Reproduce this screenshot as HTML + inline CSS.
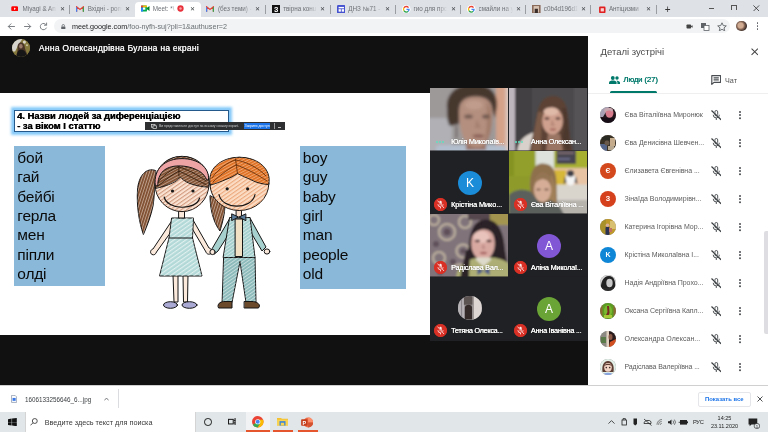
<!DOCTYPE html>
<html lang="uk">
<head>
<meta charset="utf-8">
<title>Meet</title>
<style>
*{box-sizing:border-box;margin:0;padding:0}
html,body{width:768px;height:432px;overflow:hidden;background:#111;font-family:"Liberation Sans",sans-serif}
#root{position:relative;width:768px;height:432px;overflow:hidden;background:#111;will-change:transform}
.abs{position:absolute}
/* tab bar */
#tabbar{left:0;top:0;width:768px;height:17px;background:#dee1e6}
.tab{position:absolute;top:2px;height:15px;width:65.15px;font-size:6.3px;color:#6d7176;line-height:13.4px;white-space:nowrap}
.tab .ic{position:absolute;left:6px;top:2.5px;width:8.6px;height:8.6px}
.tab .tt{position:absolute;left:17.4px;top:0;width:34px;overflow:hidden;-webkit-mask-image:linear-gradient(90deg,#000 75%,transparent);mask-image:linear-gradient(90deg,#000 75%,transparent)}
.tab .cl{position:absolute;left:54.6px;top:0;font-size:6.4px;color:#3c4043}
.tab .sep{position:absolute;right:0;top:2.5px;width:1px;height:9px;background:#9a9da2}
.tab.act{background:#fff;border-radius:4px 4px 0 0}
#toolbar{left:0;top:17px;width:768px;height:19px;background:#fff}
#pill{left:54px;top:19px;width:676px;height:14px;border-radius:7px;background:#f1f3f4}
/* meet */
#meetbar{left:0;top:36px;width:588px;height:52px;background:#111}
#slide{left:0;top:93px;width:430px;height:242px;background:#fff}
.bluebox{position:absolute;background:#8ab8d8;font-size:15.5px;line-height:19.4px;color:#0a0a0a;padding:1.7px 0 0 3.3px;letter-spacing:-0.2px}
#grid{left:430px;top:88px;width:158px;height:253px;background:#202124}
.tile{position:absolute;overflow:hidden;background:#202124}
.tile::after{content:"";position:absolute;left:0;right:0;bottom:0;height:1px;background:rgba(32,33,36,.55)}
.nm{position:absolute;color:#fff;font-size:7.3px;line-height:9px;white-space:nowrap;letter-spacing:-0.08px;text-shadow:0.15px 0 0 #fff,0 0 1px rgba(0,0,0,.5)}
.mic{position:absolute;width:9px;height:9px;border-radius:50%;background:#d93025}
.av{position:absolute;border-radius:50%;color:#fff;text-align:center}
/* panel */
#panel{left:588px;top:36px;width:180px;height:349px;background:#fff}
.row{position:absolute;left:0;width:180px;height:28px}
.row .pa{position:absolute;left:12px;top:6px;width:16px;height:16px;border-radius:50%;overflow:hidden;color:#fff;font-size:7px;line-height:16px;text-align:center;font-weight:bold}
.row .pn{position:absolute;left:36.5px;top:9px;font-size:7px;color:#5c5c5c;white-space:nowrap;line-height:10px}
.row .pm{position:absolute;left:122.6px;top:8px;width:10.4px;height:12px}
.row .pd{position:absolute;left:151px;top:9.6px;width:2px;height:10px}
#dlbar{left:0;top:385px;width:768px;height:27px;background:#fff;border-top:1px solid #d0d0d0}
#taskbar{left:0;top:412px;width:768px;height:20px;background:#e1e6e8}
</style>
</head>
<body>
<div id="root">
<div id="tabbar" class="abs">
<div class="tab" style="left:5.15px"><svg class="ic" viewBox="0 0 10 8" style="width:7.5px;height:5.6px;left:5.6px;top:3.9px"><rect x="0" y="0.5" width="10" height="7" rx="2" fill="#f00"/><path d="M4 2.3 L6.6 4 L4 5.7Z" fill="#fff"/></svg><span class="tt">Miyagi &amp; An</span><span class="cl">✕</span><span class="sep"></span></div>
<div class="tab" style="left:70.30px"><svg class="ic" viewBox="0 0 10 8" style="width:8px;height:6px;left:5.6px;top:3.7px"><path d="M0.5 7.5V1L5 4.6L9.5 1V7.5" fill="none" stroke="#ea4335" stroke-width="1.6"/><path d="M0.5 7.5V1.5" stroke="#4285f4" stroke-width="1.6"/><path d="M9.5 7.5V1.5" stroke="#34a853" stroke-width="1.6"/></svg><span class="tt">Вхідні - pom</span><span class="cl">✕</span></div>
<div class="tab act" style="left:135.45px"><svg class="ic" viewBox="0 0 10 8" style="width:8.5px;height:7px;left:6px;top:3.3px"><rect x="0" y="0.5" width="7" height="7" rx="1" fill="#00ac47"/><rect x="0" y="0.5" width="2.5" height="2.5" fill="#ea4335"/><rect x="0" y="3" width="2.5" height="4.5" fill="#2684fc"/><rect x="2.5" y="0.5" width="4.5" height="2" fill="#ffba00"/><rect x="2.3" y="2.8" width="2.8" height="2.6" fill="#fff"/><path d="M7 3 L10 1 V7 L7 5Z" fill="#00832d"/></svg><span class="tt" style="width:24px">Meet: *\</span><svg style="position:absolute;left:41.5px;top:3px;width:7px;height:7px" viewBox="0 0 8 8"><circle cx="4" cy="4" r="3.6" fill="#e8303a"/><circle cx="4" cy="4" r="1.4" fill="#fff" opacity=".55"/></svg><span class="cl">✕</span></div>
<div class="tab" style="left:200.60px"><svg class="ic" viewBox="0 0 10 8" style="width:8px;height:6px;left:5.6px;top:3.7px"><path d="M0.5 7.5V1L5 4.6L9.5 1V7.5" fill="none" stroke="#ea4335" stroke-width="1.6"/><path d="M0.5 7.5V1.5" stroke="#4285f4" stroke-width="1.6"/><path d="M9.5 7.5V1.5" stroke="#34a853" stroke-width="1.6"/></svg><span class="tt">(без теми) -</span><span class="cl">✕</span><span class="sep"></span></div>
<div class="tab" style="left:265.75px"><svg class="ic" viewBox="0 0 8 8"><rect width="8" height="8" fill="#111"/><text x="4" y="6.5" font-size="6.5" font-weight="bold" fill="#fff" text-anchor="middle" font-family="Liberation Sans">З</text></svg><span class="tt">твірна конu</span><span class="cl">✕</span><span class="sep"></span></div>
<div class="tab" style="left:330.90px"><svg class="ic" viewBox="0 0 8 8"><rect width="8" height="8" rx="1.2" fill="#4552cf"/><rect x="1.500" y="1.800" width="5" height="1.300" fill="#fff"/><rect x="1.500" y="3.900" width="2.100" height="2.300" fill="#fff"/><rect x="4.400" y="3.900" width="2.100" height="2.300" fill="#fff"/></svg><span class="tt">ДНЗ №71 -</span><span class="cl">✕</span><span class="sep"></span></div>
<div class="tab" style="left:396.05px"><svg class="ic" viewBox="0 0 10 10"><circle cx="5" cy="5" r="5" fill="#fff"/><g fill="none" stroke-width="1.5"><path d="M7.600 3A3.200 3.200 0 0 0 2.230 3.400" stroke="#ea4335"/><path d="M2.230 3.400A3.200 3.200 0 0 0 2.230 6.600" stroke="#fbbc05"/><path d="M2.230 6.600A3.200 3.200 0 0 0 7.300 7.200" stroke="#34a853"/><path d="M7.300 7.200A3.200 3.200 0 0 0 8.200 5H5.200" stroke="#4285f4"/></g></svg><span class="tt">гио для прс</span><span class="cl">✕</span><span class="sep"></span></div>
<div class="tab" style="left:461.20px"><svg class="ic" viewBox="0 0 10 10"><circle cx="5" cy="5" r="5" fill="#fff"/><g fill="none" stroke-width="1.5"><path d="M7.600 3A3.200 3.200 0 0 0 2.230 3.400" stroke="#ea4335"/><path d="M2.230 3.400A3.200 3.200 0 0 0 2.230 6.600" stroke="#fbbc05"/><path d="M2.230 6.600A3.200 3.200 0 0 0 7.300 7.200" stroke="#34a853"/><path d="M7.300 7.200A3.200 3.200 0 0 0 8.200 5H5.200" stroke="#4285f4"/></g></svg><span class="tt">смайли на у</span><span class="cl">✕</span><span class="sep"></span></div>
<div class="tab" style="left:526.35px"><svg class="ic" viewBox="0 0 8 8"><rect width="8" height="8" fill="#8a6b5a"/><rect x="1.5" y="1" width="5" height="6" fill="#d9c4b4"/><rect x="2.5" y="3.5" width="3" height="4.5" fill="#3a2c28"/></svg><span class="tt">c0b4d196d1</span><span class="cl">✕</span><span class="sep"></span></div>
<div class="tab" style="left:591.50px"><svg class="ic" viewBox="0 0 8 8"><rect x="1" y="1.5" width="6" height="6" rx="1" fill="#e02020"/><rect x="2.5" y="3" width="3" height="3" fill="#fff" opacity=".8"/></svg><span class="tt">Антіцизми</span><span class="cl">✕</span><span class="sep"></span></div>
<div class="abs" style="left:664.8px;top:2.5px;font-size:10px;line-height:13px;color:#333">+</div>
<div class="abs" style="left:708.5px;top:7.5px;width:5.5px;height:1px;background:#555"></div>
<div class="abs" style="left:731px;top:5px;width:5.5px;height:5px;border:1px solid #555;border-bottom:none"></div>
<svg class="abs" style="left:753px;top:4.5px;width:6.6px;height:6.6px" viewBox="0 0 8 8"><path d="M0.5 0.5L7.5 7.5M7.5 0.5L0.5 7.5" stroke="#333" stroke-width="1"/></svg>
</div>
<div id="toolbar" class="abs">
<svg class="abs" style="left:6px;top:3px;width:50px;height:13px" viewBox="0 0 50 13">
<g fill="none" stroke="#7d8186" stroke-width="1" stroke-linecap="round" stroke-linejoin="round">
<path d="M8.5 6.5H2.5M5 3.8L2.3 6.5L5 9.2"/>
<path d="M18.5 6.5H24.5M22 3.8L24.7 6.5L22 9.2"/>
<path d="M40.3 5A3.2 3.2 0 1 0 40.4 8"/><path d="M40.6 3V5.2H38.4"/>
</g></svg>

<div class="abs" style="left:736px;top:3.5px;width:10.5px;height:10.5px;border-radius:50%;background:radial-gradient(circle at 42% 45%,#d2ab93 0 30%,#8a6a58 45%,#3a2c28 70%,#5a4a44 100%)"></div>
<div class="abs" style="left:756.6px;top:4.8px;width:1.8px;height:1.8px;border-radius:50%;background:#5f6368;box-shadow:0 3px 0 #5f6368,0 6px 0 #5f6368"></div>
</div>
<div id="pill" class="abs">
<svg class="abs" style="left:7px;top:4.6px;width:4.6px;height:5.6px" viewBox="0 0 6 7"><rect x="0.3" y="3" width="5.4" height="4" rx=".6" fill="#5f6368"/><path d="M1.5 3V2A1.5 1.5 0 0 1 4.5 2V3" fill="none" stroke="#5f6368" stroke-width="1"/></svg>
<span class="abs" style="left:18px;top:0;font-size:7.2px;line-height:15.2px;color:#202124;white-space:nowrap">meet.google.com<span style="color:#6a6e72">/foo-nyfh-suj?pli=1&amp;authuser=2</span></span>
<svg class="abs" style="left:630.5px;top:3px;width:44px;height:9px" viewBox="0 0 44 9">
<rect x="1.500" y="2.500" width="4.600" height="4" rx=".8" fill="#444"/><path d="M6 4.200L7.600 3.200V5.800L6 4.800Z" fill="#444"/>
<rect x="16" y="1" width="5" height="5" fill="#5f6368"/><rect x="19" y="3.5" width="5" height="5" fill="#fff" stroke="#5f6368" stroke-width=".8"/>
<path d="M37 0.8L38.3 3.6L41.3 3.9L39 5.9L39.7 8.8L37 7.3L34.3 8.8L35 5.9L32.7 3.9L35.7 3.6Z" fill="none" stroke="#5f6368" stroke-width=".9"/>
</svg>
</div>
<div id="meetbar" class="abs">
<div class="abs" style="left:11.7px;top:2.7px;width:18.6px;height:18.6px;border-radius:50%;overflow:hidden;background:#857a44"><svg viewBox="0 0 18 18" style="position:absolute;left:0;top:0;width:100%;height:100%"><g filter="url(#avb)"><rect width="18" height="18" fill="#86793c"/><path d="M0 0H10L6 6L3 12H0Z" fill="#d6d2cc"/><circle cx="12" cy="3" r="1.500" fill="#d8d4c8"/><circle cx="14.500" cy="6" r="1" fill="#c8c0a0"/><path d="M5.500 9C5 5 7 3.500 8.800 3.500C11 3.500 12.500 6 12.500 9C13.500 12 14.500 14 15 16L4 17C4.500 14 5.500 12 5.500 9Z" fill="#4a3428"/><path d="M4.500 18C4.500 13 6 10.500 9 10.500C12 10.500 14 13 14.500 18Z" fill="#181614"/><ellipse cx="8.600" cy="7" rx="1.700" ry="2.200" fill="#9a7a68"/></g></svg></div>
<span class="abs" style="left:38.8px;top:6px;font-size:8.5px;line-height:12px;color:#f4f4f4;white-space:nowrap;letter-spacing:0.26px;text-shadow:0.25px 0 0 #f4f4f4">Анна Олександрівна Булана на екрані</span>
</div>
<div id="slide" class="abs">
<div class="abs" style="left:13.5px;top:16.5px;width:215px;height:22.5px;border:1px solid #24598c;background:#fff;box-shadow:0 0 2.5px 2.8px #8ccdf9, 0 0 1px 1.2px #3f9ae6"></div>
<div class="abs" style="left:17px;top:19px;font-size:8.4px;line-height:9.7px;font-weight:bold;color:#000;white-space:nowrap;transform-origin:0 0;transform:scaleX(1.1166);text-shadow:0.35px 0 0 #000">4. Назви людей за диференціацією<br>- за віком І статтю</div>
<div class="abs" style="left:145px;top:28.5px;width:140px;height:8.5px;background:#2e2f31"></div>
<svg class="abs" style="left:151px;top:30.5px;width:6px;height:5px" viewBox="0 0 6 5"><rect x=".4" y=".4" width="3.6" height="2.8" fill="none" stroke="#ddd" stroke-width=".7"/><rect x="2" y="1.8" width="3.6" height="2.8" fill="#2e2f31" stroke="#ddd" stroke-width=".7"/></svg>
<span class="abs" style="left:159px;top:30px;font-size:3.38px;line-height:7.2px;color:#c8c8c8;white-space:nowrap">Ви представляєте доступ на всьому своєму екрані.</span>
<div class="abs" style="left:243.8px;top:30.3px;width:26.5px;height:5.8px;background:#1a73e8;color:#fff;font-size:3.5px;line-height:7.4px;text-align:center;white-space:nowrap;overflow:hidden">Закрити доступ</div>
<div class="abs" style="left:273.5px;top:30px;width:.6px;height:5.6px;background:#999"></div>
<div class="abs" style="left:277.5px;top:33.5px;width:3px;height:1px;background:#bbb"></div>
<div class="bluebox" style="left:14px;top:53px;width:91px;height:140px">бой<br>гай<br>бейбі<br>герла<br>мен<br>піпли<br>олді</div>
<div class="bluebox" style="left:299.5px;top:53px;width:106.5px;height:143px">boy<br>guy<br>baby<br>girl<br>man<br>people<br>old</div>

<svg class="abs" style="left:130px;top:47px;width:160px;height:175px" viewBox="130 140 160 175">
<defs>
<pattern id="hw" width="3.4" height="3.4" patternUnits="userSpaceOnUse" patternTransform="rotate(-35)"><rect width="3.4" height="1.1" fill="#fff" opacity=".6"/></pattern>
<pattern id="hs" width="2.8" height="2.8" patternUnits="userSpaceOnUse" patternTransform="rotate(-35)"><rect width="2.8" height=".9" fill="#fff" opacity=".5"/></pattern>
<pattern id="hb" width="2.6" height="2.6" patternUnits="userSpaceOnUse" patternTransform="rotate(-72)"><rect width="2.6" height=".8" fill="#fff" opacity=".45"/><rect y="1.3" width="2.6" height=".5" fill="#2a160c" opacity=".45"/></pattern>
<pattern id="hb2" width="2.6" height="2.6" patternUnits="userSpaceOnUse" patternTransform="rotate(-28)"><rect width="2.6" height=".8" fill="#fff" opacity=".4"/><rect y="1.3" width="2.6" height=".5" fill="#2a160c" opacity=".4"/></pattern>
<pattern id="ho" width="2.6" height="2.6" patternUnits="userSpaceOnUse" patternTransform="rotate(-28)"><rect width="2.6" height=".8" fill="#fff" opacity=".35"/><rect y="1.3" width="2.6" height=".4" fill="#7a3408" opacity=".35"/></pattern>
<pattern id="hf" width="3.2" height="3.2" patternUnits="userSpaceOnUse" patternTransform="rotate(-35)"><rect width="3.2" height="1.1" fill="#b8704c" opacity=".62"/></pattern>
<pattern id="hf2" width="3.2" height="3.2" patternUnits="userSpaceOnUse" patternTransform="rotate(-35)"><rect width="3.2" height="1.1" fill="#e07f44" opacity=".55"/></pattern>
</defs>
<g stroke="#151515" stroke-width="1" stroke-linejoin="round" stroke-linecap="round">
<!-- girl ponytails -->
<path d="M155.500 170.500C146 167 138.500 176 137.500 190C136.500 206 139 222 143.400 234.500C147 226 151 216 153 206C154.500 198 154 188 156 181Z" fill="#8f5c3b"/>
<path d="M155.500 170.500C146 167 138.500 176 137.500 190C136.500 206 139 222 143.400 234.500C147 226 151 216 153 206C154.500 198 154 188 156 181Z" fill="url(#hb)" stroke="none"/>
<path d="M210 196C210 208 213 222 220 231C222 224 225 214 225 204Z" fill="#8f5c3b"/>
<path d="M210 196C210 208 213 222 220 231C222 224 225 214 225 204Z" fill="url(#hb)" stroke="none"/>
<!-- girl legs -->
<path d="M173 275L174 302H178L178 275ZM183 275L183.500 302H187.500L188 275Z" fill="#fbe9dc"/>
<ellipse cx="170.500" cy="305" rx="7" ry="3.300" fill="#a9a9d4"/><ellipse cx="189.500" cy="305" rx="7.500" ry="3.300" fill="#a9a9d4"/>
<!-- girl arms -->
<path d="M173 219L153 249C150.500 249.500 149.500 253 152 254.500C154 255.500 156 254 156.500 252L176 225Z" fill="#fbe9dc"/>
<path d="M192.500 219L209 248C211.500 248.500 213 251.500 211 253.500C209 255 206.500 254 206 252L190 225Z" fill="#fbe9dc"/>
<!-- dress -->
<path d="M172 218H193.500L192.500 238L202 276H159.500L169 238Z" fill="#b2d9d7"/>
<path d="M172 218H193.500L192.500 238L202 276H159.500L169 238Z" fill="url(#hw)" stroke="none"/>
<path d="M169 238H192.500" fill="none"/>
<rect x="179" y="209" width="5.500" height="9" fill="#fbe9dc"/>
<!-- boy pants -->
<path d="M224 257H255L256 302.500H246L240 261.500L232 302.500H222.500Z" fill="#8dbaba"/>
<path d="M224 257H255L256 302.500H246L240 261.500L232 302.500H222.500Z" fill="url(#hs)" stroke="none"/>
<path d="M218 306C218 303 221 301.500 225 301.500H232V308H219Z" fill="#6b4a2c"/>
<path d="M244.500 301.500H252C256 301.500 259.500 303.500 259.500 306L258.500 308H244.500Z" fill="#6b4a2c"/>
<!-- boy arms -->
<path d="M230 218L212.500 248C211 250 212 253.500 214.500 254L218 251L234 226Z" fill="#a6d0ce"/>
<path d="M250 218L266 247L262 251L247 226Z" fill="#a6d0ce"/>
<ellipse cx="267" cy="251.500" rx="2.800" ry="2.600" fill="#fbe9dc"/>
<ellipse cx="212.500" cy="252" rx="2.600" ry="2.600" fill="#fbe9dc"/>
<!-- boy jacket -->
<path d="M230 217.500H250L255 257.500H223.500Z" fill="#a6d0ce"/>
<path d="M230 217.500H250L255 257.500H223.500Z" fill="url(#hs)" stroke="none"/>
<path d="M235.500 219H242.500V256.500H235.500Z" fill="#f1e0c4"/>
<path d="M236.500 210H241.500V218H236.500Z" fill="#f6dcc8"/>
<path d="M232 214L238.500 217L232 220.500ZM245.500 214L239 217L245.500 220.500Z" fill="#5b7d9c"/>
<!-- girl head -->
<ellipse cx="182" cy="184" rx="27" ry="27.600" fill="#fbe3d3"/>
<ellipse cx="182" cy="184" rx="27" ry="27.600" fill="url(#hf)" stroke="none"/>
<!-- girl hair: top + bangs -->
<path d="M155.600 188.300C152.500 170 165 156.400 182 156.400C199 156.400 211.500 170 208.600 187.200C202 186.800 192 185 186.700 182C184 180.500 182 179 180.500 177C178 180 174 182.500 172.200 183.100C167 185.500 161 187.500 155.600 188.300Z" fill="#8f5c3b"/>
<path d="M155.600 188.300C152.500 170 165 156.400 182 156.400C199 156.400 211.500 170 208.600 187.200C202 186.800 192 185 186.700 182C184 180.500 182 179 180.500 177C178 180 174 182.500 172.200 183.100C167 185.500 161 187.500 155.600 188.300Z" fill="url(#hb2)" stroke="none"/>
<path d="M178.900 166V176M178.900 167C172 169 163 175 157.500 183M178.900 171C173 174 165 180 158 186M178.900 167C186 169 197 174 206 181M178.900 171C186 174 196 180 206 184.500" fill="none" stroke="#2a1608" stroke-width=".8"/>
<!-- headband -->
<path d="M155.300 185.500C153 168 166 158.600 182 158.600C197.500 158.600 209.600 167 208.500 180L206.700 179.800C204 173 198 170.500 196.700 169.800C191 167 185 165.900 178.900 165.900C172 165.900 166.500 168 163.300 170.900C159.500 174.500 157.600 180 157.800 185.300Z" fill="#eea4a4"/>
<!-- boy head -->
<ellipse cx="239.400" cy="183.900" rx="29.400" ry="26.600" fill="#fbdcc4"/>
<ellipse cx="239.400" cy="183.900" rx="29.400" ry="26.600" fill="url(#hf2)" stroke="none"/>
<path d="M210.400 185C206.500 170 220 157.300 239.400 157.300C259 157.300 272 170 268.600 184.600C262 184 256 182.500 252 180.200C246 177.500 241 175.500 237.500 173.500C234 176 230 178 227 179C221 181.500 215 184 210.400 185Z" fill="#e8792a"/>
<path d="M210.400 185C206.500 170 220 157.300 239.400 157.300C259 157.300 272 170 268.600 184.600C262 184 256 182.500 252 180.200C246 177.500 241 175.500 237.500 173.500C234 176 230 178 227 179C221 181.500 215 184 210.400 185Z" fill="url(#ho)" stroke="none"/>
<path d="M235.500 159C236 164 237 169 237.500 173.500M235.500 160C228 162 218 169 212 178M236 165C230 168 221 174 213 182M235.500 160C244 161 258 167 266 176M236.500 165C245 168 257 174 267 181" fill="none" stroke="#5a2808" stroke-width=".8"/>
<!-- faces -->
<g fill="#1a1a1a" stroke="none"><circle cx="172.500" cy="191" r="1.600"/><circle cx="193" cy="191" r="1.600"/><circle cx="227.200" cy="188.800" r="1.600"/><circle cx="247.600" cy="188.800" r="1.600"/></g>
<path d="M164.200 197C167 210 196 211 199.600 198" fill="none" stroke-width="1.200"/>
<path d="M219 194.500C222 210 252 210 255 194.500" fill="none" stroke-width="1.200"/>
</g>
</svg>

</div>
<div id="grid" class="abs">
<div class="tile" style="left:0px;top:0px;width:79px;height:63px;border-right:1px solid #202124"><svg class="abs" style="left:0;top:0;width:79px;height:63px" viewBox="430 88 79 63" preserveAspectRatio="none"><defs><filter id="b43088" x="-10%" y="-10%" width="120%" height="120%"><feGaussianBlur stdDeviation="1.45"/></filter></defs><g filter="url(#b43088)">
<rect x="420" y="80" width="100" height="80" fill="#9d9999"/>
<rect x="420" y="118" width="32" height="42" fill="#b0b0b5"/>
<rect x="496" y="80" width="20" height="80" fill="#d4a289"/>
<rect x="505.500" y="80" width="8" height="80" fill="#dac6be"/>
<path d="M447 108C446 94 456 84 474 84C490 84 498 94 497 106L495 118L490 104C482 98.500 466 98.500 460 104L459 124L450 126C447 122 447 114 447 108Z" fill="#46372f"/>
<rect x="436" y="145" width="70" height="12" rx="4" fill="#b2becd"/>
<rect x="466" y="136" width="20" height="14" fill="#977163"/>
<path d="M459 112C459 100 466 96.500 476 96.500C486 96.500 492.500 101 492.500 112C493 124 491 136 486 143C482 149 472 149 467 143C461 136 459 124 459 112Z" fill="#b48f7f"/>
<path d="M486 102C492 106 493 120 490 134C488 140 486 144 484 146C487 130 488 114 486 102Z" fill="#a27c6b"/>
<ellipse cx="474" cy="105" rx="9" ry="4.500" fill="#bf9c8c"/>
<ellipse cx="468.500" cy="116.500" rx="4.500" ry="2" fill="#70584f"/>
<ellipse cx="486" cy="116.500" rx="4" ry="2" fill="#6c544b"/>
<path d="M476.500 119L475 128H481Z" fill="#a47e6e"/>
<ellipse cx="478.500" cy="136" rx="6" ry="1.600" fill="#84594f"/>
<path d="M456.500 126V138" stroke="#4a3c3a" stroke-width="1.200" fill="none"/>
</g></svg><span style="position:absolute;left:6px;top:52.6px;width:2px;height:2px;border-radius:50%;background:#5fe0c0;box-shadow:3px 0 0 #5fe0c0,6px 0 0 #5fe0c0"></span><span class="nm" style="left:21px;top:49.2px;letter-spacing:-0.208px">Юлія Миколаїв...</span></div>
<div class="tile" style="left:79px;top:0px;width:79px;height:63px;border-right:1px solid #202124"><svg class="abs" style="left:0;top:0;width:79px;height:63px" viewBox="509 88 79 63" preserveAspectRatio="none"><defs><filter id="b50988" x="-10%" y="-10%" width="120%" height="120%"><feGaussianBlur stdDeviation="1.1"/></filter></defs><g filter="url(#b50988)">
<rect x="500" y="80" width="100" height="80" fill="#4c4a4c"/>
<rect x="500" y="80" width="32" height="80" fill="#424042"/>
<rect x="507" y="80" width="8" height="80" fill="#beb6bd"/>
<rect x="574" y="80" width="20" height="80" fill="#555355"/>
<path d="M517 154C517 140 526 133 540 131L546 154Z" fill="#d8d0ca"/>
<path d="M553 96C543 96 539 104 537 114C535 126 532 138 529 154H573C570 140 569 128 568 116C567 104 563 96 553 96Z" fill="#5c4236"/>
<path d="M538 112C535 126 533 140 531 154L541 154C541 140 541 126 543 112Z" fill="#7a5a46"/>
<path d="M546 152L548 134H560L563 152Z" fill="#9a7464"/>
<ellipse cx="552.500" cy="121" rx="10.300" ry="13.500" fill="#cfa08e"/>
<ellipse cx="551" cy="111.500" rx="7.500" ry="4" fill="#e0baa8"/>
<ellipse cx="547" cy="118.500" rx="2.600" ry="1.200" fill="#5e4238"/>
<ellipse cx="558" cy="118.500" rx="2.600" ry="1.200" fill="#5e4238"/>
<path d="M552 119L550.500 126H555Z" fill="#b88878"/>
<ellipse cx="553" cy="129.500" rx="3.200" ry="1.200" fill="#a66a60"/>
<path d="M562 108C565 118 565 128 562 136L566 150L571 150C569 136 569 120 566 108Z" fill="#4e382e"/>
</g></svg><span style="position:absolute;left:6px;top:52.6px;width:2px;height:2px;border-radius:50%;background:#5fe0c0;box-shadow:3px 0 0 #5fe0c0,6px 0 0 #5fe0c0"></span><span class="nm" style="left:21.8px;top:49.2px;letter-spacing:-0.249px">Анна Олексан...</span></div>
<div class="tile" style="left:0px;top:63px;width:79px;height:63px;border-right:1px solid #202124"><div class="av" style="left:28px;top:19.5px;width:24px;height:24px;background:#1a8cd8;font-size:12px;line-height:24.5px">K</div><span class="mic" style="left:4px;top:46.8px;width:13px;height:13px"><svg viewBox="0 0 13 13" style="position:absolute;left:0;top:0;width:13px;height:13px"><circle cx="6.5" cy="6.5" r="6.5" fill="#d93025"/><rect x="5.3" y="2.8" width="2.4" height="4.6" rx="1.2" fill="#fdeeee"/><path d="M3.9 6.2A2.6 2.6 0 0 0 9.1 6.2M6.5 8.8V10.4" fill="none" stroke="#fdeeee" stroke-width=".8"/><path d="M3.2 2.8L9.8 10.2" stroke="#d93025" stroke-width="1.6"/><path d="M3.5 2.6L10 10" stroke="#fdeeee" stroke-width=".8"/></svg></span><span class="nm" style="left:21px;top:49.2px;letter-spacing:-0.077px">Крістіна Мико...</span></div>
<div class="tile" style="left:79px;top:63px;width:79px;height:63px;border-right:1px solid #202124"><svg class="abs" style="left:0;top:0;width:79px;height:63px" viewBox="509 151 79 63" preserveAspectRatio="none"><defs><filter id="b509151" x="-10%" y="-10%" width="120%" height="120%"><feGaussianBlur stdDeviation="0.9"/></filter></defs><g filter="url(#b509151)">
<rect x="500" y="145" width="100" height="80" fill="#929f2a"/>
<rect x="500" y="145" width="14" height="80" fill="#859323"/>
<rect x="505" y="176" width="32" height="20" fill="#8e9b2c"/>
<rect x="535.500" y="145" width="19" height="40" fill="#dde2dc"/>
<rect x="554" y="145" width="40" height="24" fill="#a8b030"/>
<rect x="556.500" y="148" width="19.500" height="16" fill="#474450"/>
<rect x="558" y="152" width="16" height="2" fill="#7a6a70"/><rect x="558" y="158" width="12" height="2" fill="#6a6a8a"/>
<rect x="554" y="168" width="40" height="17" fill="#e7c3a3"/>
<rect x="554.500" y="170" width="11.500" height="15" fill="#d8b838"/>
<rect x="554" y="184.500" width="40" height="17" fill="#d9d5cd"/>
<rect x="554" y="200" width="40" height="20" fill="#b6b2ac"/>
<ellipse cx="570.500" cy="179" rx="5" ry="6.500" fill="#f4f4f4"/>
<ellipse cx="570.500" cy="173.500" rx="3.600" ry="3.200" fill="#3c3c46"/>
<path d="M565 176L563.500 184L566.500 182ZM576 176L577.500 184L574.500 182Z" fill="#3c3c46"/>
<path d="M543 163.500C533 163.500 530 174 530 186L531 204H557L556.500 184C556.500 172 553 163.500 543 163.500Z" fill="#8e704e"/>
<path d="M551 174C556 184 556 196 555.500 206L548 206Z" fill="#a08058"/>
<path d="M534 190C534 182 538 179 542.500 179C547 179 551 182 551 190C551 197 547 202 542.500 202C538 202 534 197 534 190Z" fill="#d6ae98"/>
<path d="M533 186C534 178 538 172 543 172C548 172 552 178 552 187C549 181 546 179 543 179C540 179 536 181 533 186Z" fill="#947452"/>
<ellipse cx="538.500" cy="189.500" rx="2.400" ry="1" fill="#7a5a4a"/><ellipse cx="546.500" cy="189.500" rx="2.400" ry="1" fill="#7a5a4a"/>
<path d="M509 195C514 189 527 188 532 193L538 201C542 204 546 203 550 200L558 204L566 218H509Z" fill="#5c605d"/>
</g></svg><span class="mic" style="left:4.5px;top:46.8px;width:13px;height:13px"><svg viewBox="0 0 13 13" style="position:absolute;left:0;top:0;width:13px;height:13px"><circle cx="6.5" cy="6.5" r="6.5" fill="#d93025"/><rect x="5.3" y="2.8" width="2.4" height="4.6" rx="1.2" fill="#fdeeee"/><path d="M3.9 6.2A2.6 2.6 0 0 0 9.1 6.2M6.5 8.8V10.4" fill="none" stroke="#fdeeee" stroke-width=".8"/><path d="M3.2 2.8L9.8 10.2" stroke="#d93025" stroke-width="1.6"/><path d="M3.5 2.6L10 10" stroke="#fdeeee" stroke-width=".8"/></svg></span><span class="nm" style="left:21.8px;top:49.2px;letter-spacing:-0.235px">Єва Віталіївна ...</span></div>
<div class="tile" style="left:0px;top:126px;width:79px;height:63px;border-right:1px solid #202124"><svg class="abs" style="left:0;top:0;width:79px;height:63px" viewBox="430 214 79 63" preserveAspectRatio="none"><defs><filter id="b430214" x="-10%" y="-10%" width="120%" height="120%"><feGaussianBlur stdDeviation="0.9"/></filter></defs><g filter="url(#b430214)">
<rect x="420" y="205" width="100" height="80" fill="#80737a"/>
<g fill="none" stroke="#b4a89a" stroke-width="2.600"><circle cx="447" cy="232" r="8"/><circle cx="463" cy="251" r="6.500"/><circle cx="439" cy="258" r="6"/><circle cx="465" cy="222" r="6"/><circle cx="434" cy="220" r="5"/><path d="M452 268C458 262 466 264 468 272"/></g>
<g fill="#5e5058"><circle cx="447" cy="232" r="3.500"/><circle cx="463" cy="251" r="2.600"/><circle cx="436" cy="244" r="3"/><circle cx="453" cy="262" r="3"/><circle cx="440" cy="272" r="3"/></g>
<rect x="489" y="212" width="22" height="13" fill="#a3954f"/>
<rect x="468" y="212" width="22" height="8" fill="#54464e"/>
<path d="M486 219.500C474 219.500 470 232 469 244C468 256 464 266 460 280H510L505 250C504 234 499 219.500 486 219.500Z" fill="#2a2028"/>
<path d="M456 280C456 264 468 258 484 257C496 257 508 260 510 266V280Z" fill="#adae74"/>
<ellipse cx="483" cy="243.500" rx="11.800" ry="16.500" fill="#d8a9a1"/>
<ellipse cx="481.500" cy="237" rx="8" ry="6" fill="#e8c3bb"/>
<path d="M470.500 239C471 229 477 223.500 486 223.500C494 223.500 497.500 230 497.500 241C494 233 488 228.500 482 229.500C476.500 230.500 473 234 470.500 239Z" fill="#2a2028"/>
<ellipse cx="477.500" cy="241" rx="2.700" ry="1.200" fill="#4e3234"/><ellipse cx="489" cy="241" rx="2.700" ry="1.200" fill="#4e3234"/>
<path d="M483 243L481.500 249H485.500Z" fill="#c08c86"/>
<ellipse cx="483.500" cy="253" rx="3.400" ry="1.200" fill="#a65e5c"/>
<path d="M466 250C464 260 461 270 460 280L469 280C469 268 470 258 470.500 250Z" fill="#2a2028"/>
<path d="M477.500 268L483.500 271L477.500 275ZM489.500 268L483.500 271L489.500 275Z" fill="#46568a"/>
<path d="M475.500 259.500L483.500 266.500L491.500 259.500L489.500 257.500H477.500Z" fill="#dedacb"/>
</g></svg><span class="mic" style="left:4px;top:46.8px;width:13px;height:13px"><svg viewBox="0 0 13 13" style="position:absolute;left:0;top:0;width:13px;height:13px"><circle cx="6.5" cy="6.5" r="6.5" fill="#d93025"/><rect x="5.3" y="2.8" width="2.4" height="4.6" rx="1.2" fill="#fdeeee"/><path d="M3.9 6.2A2.6 2.6 0 0 0 9.1 6.2M6.5 8.8V10.4" fill="none" stroke="#fdeeee" stroke-width=".8"/><path d="M3.2 2.8L9.8 10.2" stroke="#d93025" stroke-width="1.6"/><path d="M3.5 2.6L10 10" stroke="#fdeeee" stroke-width=".8"/></svg></span><span class="nm" style="left:21px;top:49.2px;letter-spacing:-0.230px">Радіслава Вал...</span></div>
<div class="tile" style="left:79px;top:126px;width:79px;height:63px;border-right:1px solid #202124"><div class="av" style="left:28px;top:19.5px;width:24px;height:24px;background:#8257d6;font-size:12px;line-height:24.5px">A</div><span class="mic" style="left:4.5px;top:46.8px;width:13px;height:13px"><svg viewBox="0 0 13 13" style="position:absolute;left:0;top:0;width:13px;height:13px"><circle cx="6.5" cy="6.5" r="6.5" fill="#d93025"/><rect x="5.3" y="2.8" width="2.4" height="4.6" rx="1.2" fill="#fdeeee"/><path d="M3.9 6.2A2.6 2.6 0 0 0 9.1 6.2M6.5 8.8V10.4" fill="none" stroke="#fdeeee" stroke-width=".8"/><path d="M3.2 2.8L9.8 10.2" stroke="#d93025" stroke-width="1.6"/><path d="M3.5 2.6L10 10" stroke="#fdeeee" stroke-width=".8"/></svg></span><span class="nm" style="left:21.8px;top:49.2px;letter-spacing:-0.195px">Аліна Миколаї...</span></div>
<div class="tile" style="left:0px;top:189px;width:79px;height:63px;border-right:1px solid #202124"><div class="av" style="left:28.3px;top:19.3px;width:23.6px;height:23.6px;background:#b4b0b3;overflow:hidden"><svg viewBox="-12 -12 24 24" style="position:absolute;left:0;top:0;width:100%;height:100%"><g filter="url(#avb)"><rect x="-12" y="-12" width="8" height="24" fill="#b6b2b6"/><rect x="-9" y="-12" width="1.2" height="24" fill="#8a868c"/><rect x="-6" y="-12" width="10" height="9" fill="#5c5252"/><rect x="-5.500" y="-3" width="9" height="15" fill="#8a8486"/><path d="M-5 12V0C-5 -4 2.400 -4 2.400 0V12Z" fill="#352c2c"/><rect x="3" y="-12" width="9" height="24" fill="#ddd6d2"/><rect x="3" y="-12" width="1.200" height="24" fill="#9a9492"/></g></svg></div><span class="mic" style="left:4px;top:46.8px;width:13px;height:13px"><svg viewBox="0 0 13 13" style="position:absolute;left:0;top:0;width:13px;height:13px"><circle cx="6.5" cy="6.5" r="6.5" fill="#d93025"/><rect x="5.3" y="2.8" width="2.4" height="4.6" rx="1.2" fill="#fdeeee"/><path d="M3.9 6.2A2.6 2.6 0 0 0 9.1 6.2M6.5 8.8V10.4" fill="none" stroke="#fdeeee" stroke-width=".8"/><path d="M3.2 2.8L9.8 10.2" stroke="#d93025" stroke-width="1.6"/><path d="M3.5 2.6L10 10" stroke="#fdeeee" stroke-width=".8"/></svg></span><span class="nm" style="left:21px;top:49.2px;letter-spacing:-0.291px">Тетяна Олекса...</span></div>
<div class="tile" style="left:79px;top:189px;width:79px;height:63px;border-right:1px solid #202124"><div class="av" style="left:28px;top:19.5px;width:24px;height:24px;background:#6aa336;font-size:12px;line-height:24.5px">A</div><span class="mic" style="left:4.5px;top:46.8px;width:13px;height:13px"><svg viewBox="0 0 13 13" style="position:absolute;left:0;top:0;width:13px;height:13px"><circle cx="6.5" cy="6.5" r="6.5" fill="#d93025"/><rect x="5.3" y="2.8" width="2.4" height="4.6" rx="1.2" fill="#fdeeee"/><path d="M3.9 6.2A2.6 2.6 0 0 0 9.1 6.2M6.5 8.8V10.4" fill="none" stroke="#fdeeee" stroke-width=".8"/><path d="M3.2 2.8L9.8 10.2" stroke="#d93025" stroke-width="1.6"/><path d="M3.5 2.6L10 10" stroke="#fdeeee" stroke-width=".8"/></svg></span><span class="nm" style="left:21.8px;top:49.2px;letter-spacing:-0.243px">Анна Іванівна ...</span></div>
</div>
<div id="panel" class="abs"><svg width="0" height="0" style="position:absolute"><defs><filter id="avb"><feGaussianBlur stdDeviation=".45"/></filter></defs></svg>
<span class="abs" style="left:12.5px;top:9.5px;font-size:9.5px;line-height:12px;color:#4a4a4a;white-space:nowrap">Деталі зустрічі</span>
<svg class="abs" style="left:162.5px;top:12px;width:7.5px;height:7.5px" viewBox="0 0 8 8"><path d="M0.6 0.6L7.4 7.4M7.4 0.6L0.6 7.4" stroke="#444" stroke-width="1.1"/></svg>
<svg class="abs" style="left:21px;top:40px;width:11px;height:8px" viewBox="0 0 11 8"><circle cx="3.8" cy="2" r="1.9" fill="#00796b"/><path d="M0 8V6.6C0 5.2 2.4 4.6 3.8 4.6S7.6 5.2 7.6 6.6V8Z" fill="#00796b"/><circle cx="8" cy="2" r="1.7" fill="#00796b"/><path d="M8.4 8V6.5C8.4 5.6 8 5 7.4 4.7 9 4.7 11 5.3 11 6.6V8Z" fill="#00796b"/></svg>
<span class="abs" style="left:35.2px;top:38.6px;font-size:7.8px;line-height:10px;color:#00796b;white-space:nowrap;letter-spacing:-0.14px;text-shadow:0.25px 0 0 #00796b">Люди (27)</span>
<div class="abs" style="left:22px;top:55px;width:46.5px;height:2px;background:#00796b;border-radius:1.5px 1.5px 0 0"></div>
<div class="abs" style="left:0;top:57px;width:180px;height:1px;background:#efefef"></div>
<svg class="abs" style="left:122.7px;top:39px;width:10.4px;height:10px" viewBox="0 0 10 10"><path d="M0.600 0.600H9.400V7.300H2.800L0.600 9.400Z" fill="none" stroke="#4a4d51" stroke-width="1.150" stroke-linejoin="round"/><path d="M2.400 2.900H7.600M2.400 4.900H7.600" stroke="#4a4d51" stroke-width="1.100"/></svg>
<span class="abs" style="left:137px;top:39.5px;font-size:7.2px;line-height:10px;color:#555;white-space:nowrap">Чат</span>
<div class="row" style="top:65px"><span class="pa" style="background:#888"><svg viewBox="0 0 16 16" style="position:absolute;left:0;top:0;width:16px;height:16px"><g filter="url(#avb)"><rect width="16" height="16" fill="#20141a"/><path d="M0 0H9L3 10H0Z" fill="#a8a0b4"/><ellipse cx="9.500" cy="6" rx="4" ry="4.800" fill="#d67c8c"/><path d="M4 3C6 0 12 0 13 3L12 5C10 3 7 3 5 6Z" fill="#c8a8b0"/><rect x="0" y="11" width="16" height="5" fill="#160e12"/></g></svg></span><span class="pn" style="letter-spacing:-0.008px">Єва Віталіївна Миронюк</span><svg class="pm" viewBox="0 0 10 12"><g fill="none" stroke="#4a4d51" stroke-width=".95"><rect x="3.700" y="1.500" width="2.800" height="5.400" rx="1.400"/><path d="M2 5.800A3.100 3.100 0 0 0 8.200 5.800M5.100 9V11"/></g><path d="M0.700 1.400L9.700 10.400" stroke="#fff" stroke-width="1.200"/><path d="M0.300 1.500L9.900 10.800" stroke="#3c4043" stroke-width="1.250"/></svg><span class="pd"><i style="position:absolute;left:0;top:0;width:2px;height:2px;border-radius:50%;background:#4a4d51;box-shadow:0 3.1px 0 #4a4d51,0 6.2px 0 #4a4d51"></i></span></div>
<div class="row" style="top:93px"><span class="pa" style="background:#888"><svg viewBox="0 0 16 16" style="position:absolute;left:0;top:0;width:16px;height:16px"><g filter="url(#avb)"><rect width="16" height="16" fill="#3a3028"/><rect x="10" y="3" width="5" height="8" fill="#c4ac8c"/><rect x="0" y="9" width="7" height="7" fill="#56668a"/><circle cx="7" cy="8" r="2.500" fill="#6a5a4a"/><rect x="2" y="1" width="8" height="4" fill="#2a2a22"/><rect x="8" y="11" width="6" height="4" fill="#b8a890"/></g></svg></span><span class="pn" style="letter-spacing:-0.033px">Єва Денисівна Шевчен...</span><svg class="pm" viewBox="0 0 10 12"><g fill="none" stroke="#4a4d51" stroke-width=".95"><rect x="3.700" y="1.500" width="2.800" height="5.400" rx="1.400"/><path d="M2 5.800A3.100 3.100 0 0 0 8.200 5.800M5.100 9V11"/></g><path d="M0.700 1.400L9.700 10.400" stroke="#fff" stroke-width="1.200"/><path d="M0.300 1.500L9.900 10.800" stroke="#3c4043" stroke-width="1.250"/></svg><span class="pd"><i style="position:absolute;left:0;top:0;width:2px;height:2px;border-radius:50%;background:#4a4d51;box-shadow:0 3.1px 0 #4a4d51,0 6.2px 0 #4a4d51"></i></span></div>
<div class="row" style="top:121px"><span class="pa" style="background:#d3481c">Є</span><span class="pn" style="letter-spacing:-0.045px">Єлизавета Євгенівна ...</span><svg class="pm" viewBox="0 0 10 12"><g fill="none" stroke="#4a4d51" stroke-width=".95"><rect x="3.700" y="1.500" width="2.800" height="5.400" rx="1.400"/><path d="M2 5.800A3.100 3.100 0 0 0 8.200 5.800M5.100 9V11"/></g><path d="M0.700 1.400L9.700 10.400" stroke="#fff" stroke-width="1.200"/><path d="M0.300 1.500L9.900 10.800" stroke="#3c4043" stroke-width="1.250"/></svg><span class="pd"><i style="position:absolute;left:0;top:0;width:2px;height:2px;border-radius:50%;background:#4a4d51;box-shadow:0 3.1px 0 #4a4d51,0 6.2px 0 #4a4d51"></i></span></div>
<div class="row" style="top:149px"><span class="pa" style="background:#d6411d">З</span><span class="pn" style="letter-spacing:-0.014px">Зінаїда Володимирівн...</span><svg class="pm" viewBox="0 0 10 12"><g fill="none" stroke="#4a4d51" stroke-width=".95"><rect x="3.700" y="1.500" width="2.800" height="5.400" rx="1.400"/><path d="M2 5.800A3.100 3.100 0 0 0 8.200 5.800M5.100 9V11"/></g><path d="M0.700 1.400L9.700 10.400" stroke="#fff" stroke-width="1.200"/><path d="M0.300 1.500L9.900 10.800" stroke="#3c4043" stroke-width="1.250"/></svg><span class="pd"><i style="position:absolute;left:0;top:0;width:2px;height:2px;border-radius:50%;background:#4a4d51;box-shadow:0 3.1px 0 #4a4d51,0 6.2px 0 #4a4d51"></i></span></div>
<div class="row" style="top:177px"><span class="pa" style="background:#888"><svg viewBox="0 0 16 16" style="position:absolute;left:0;top:0;width:16px;height:16px"><g filter="url(#avb)"><rect width="16" height="16" fill="#c09a2c"/><rect x="0" y="0" width="6" height="16" fill="#a8902c"/><rect x="10" y="2" width="6" height="8" fill="#d8c070"/><path d="M5.500 16V9C5.500 7 9.500 7 9.500 9V16Z" fill="#2a3252"/><circle cx="7.500" cy="6.300" r="1.800" fill="#d8b098"/><rect x="9" y="9" width="3" height="4" fill="#c07060"/></g></svg></span><span class="pn" style="letter-spacing:-0.004px">Катерина Ігорівна Мор...</span><svg class="pm" viewBox="0 0 10 12"><g fill="none" stroke="#4a4d51" stroke-width=".95"><rect x="3.700" y="1.500" width="2.800" height="5.400" rx="1.400"/><path d="M2 5.800A3.100 3.100 0 0 0 8.200 5.800M5.100 9V11"/></g><path d="M0.700 1.400L9.700 10.400" stroke="#fff" stroke-width="1.200"/><path d="M0.300 1.500L9.900 10.800" stroke="#3c4043" stroke-width="1.250"/></svg><span class="pd"><i style="position:absolute;left:0;top:0;width:2px;height:2px;border-radius:50%;background:#4a4d51;box-shadow:0 3.1px 0 #4a4d51,0 6.2px 0 #4a4d51"></i></span></div>
<div class="row" style="top:205px"><span class="pa" style="background:#0f87d6">K</span><span class="pn" style="letter-spacing:-0.035px">Крістіна Миколаївна І...</span><svg class="pm" viewBox="0 0 10 12"><g fill="none" stroke="#4a4d51" stroke-width=".95"><rect x="3.700" y="1.500" width="2.800" height="5.400" rx="1.400"/><path d="M2 5.800A3.100 3.100 0 0 0 8.200 5.800M5.100 9V11"/></g><path d="M0.700 1.400L9.700 10.400" stroke="#fff" stroke-width="1.200"/><path d="M0.300 1.500L9.900 10.800" stroke="#3c4043" stroke-width="1.250"/></svg><span class="pd"><i style="position:absolute;left:0;top:0;width:2px;height:2px;border-radius:50%;background:#4a4d51;box-shadow:0 3.1px 0 #4a4d51,0 6.2px 0 #4a4d51"></i></span></div>
<div class="row" style="top:233px"><span class="pa" style="background:#888"><svg viewBox="0 0 16 16" style="position:absolute;left:0;top:0;width:16px;height:16px"><g filter="url(#avb)"><rect width="16" height="16" fill="#d8d8d8"/><path d="M1 16C0 8 3 1 9 1C14 1 16 6 15 16Z" fill="#222"/><ellipse cx="9.500" cy="8" rx="3.200" ry="4.200" fill="#c8c8c8"/><rect x="3" y="13" width="12" height="3" fill="#2a2a2a"/></g></svg></span><span class="pn" style="letter-spacing:-0.032px">Надія Андріївна Прохо...</span><svg class="pm" viewBox="0 0 10 12"><g fill="none" stroke="#4a4d51" stroke-width=".95"><rect x="3.700" y="1.500" width="2.800" height="5.400" rx="1.400"/><path d="M2 5.800A3.100 3.100 0 0 0 8.200 5.800M5.100 9V11"/></g><path d="M0.700 1.400L9.700 10.400" stroke="#fff" stroke-width="1.200"/><path d="M0.300 1.500L9.900 10.800" stroke="#3c4043" stroke-width="1.250"/></svg><span class="pd"><i style="position:absolute;left:0;top:0;width:2px;height:2px;border-radius:50%;background:#4a4d51;box-shadow:0 3.1px 0 #4a4d51,0 6.2px 0 #4a4d51"></i></span></div>
<div class="row" style="top:261px"><span class="pa" style="background:#888"><svg viewBox="0 0 16 16" style="position:absolute;left:0;top:0;width:16px;height:16px"><g filter="url(#avb)"><rect width="16" height="16" fill="#5c9c22"/><rect x="0" y="0" width="2.500" height="16" fill="#8a6a30"/><rect x="13.500" y="0" width="2.500" height="16" fill="#8a6a30"/><ellipse cx="8" cy="8" rx="4" ry="6" fill="#7ab830"/><path d="M7 3L9 3L9.500 10L8 14L6 12L7.500 9Z" fill="#7a2a20"/><rect x="4" y="12" width="8" height="3" fill="#a8c838"/></g></svg></span><span class="pn" style="letter-spacing:-0.033px">Оксана Сергіївна Капл...</span><svg class="pm" viewBox="0 0 10 12"><g fill="none" stroke="#4a4d51" stroke-width=".95"><rect x="3.700" y="1.500" width="2.800" height="5.400" rx="1.400"/><path d="M2 5.800A3.100 3.100 0 0 0 8.200 5.800M5.100 9V11"/></g><path d="M0.700 1.400L9.700 10.400" stroke="#fff" stroke-width="1.200"/><path d="M0.300 1.500L9.900 10.800" stroke="#3c4043" stroke-width="1.250"/></svg><span class="pd"><i style="position:absolute;left:0;top:0;width:2px;height:2px;border-radius:50%;background:#4a4d51;box-shadow:0 3.1px 0 #4a4d51,0 6.2px 0 #4a4d51"></i></span></div>
<div class="row" style="top:289px"><span class="pa" style="background:#888"><svg viewBox="0 0 16 16" style="position:absolute;left:0;top:0;width:16px;height:16px"><g filter="url(#avb)"><rect width="16" height="16" fill="#8c8a82"/><rect x="1" y="6" width="5" height="6" fill="#5a7a4a"/><rect x="6.500" y="0" width="2.500" height="16" fill="#e0d0c0"/><rect x="9" y="0" width="7" height="16" fill="#2c1c1c"/><ellipse cx="10.500" cy="6" rx="2" ry="3" fill="#8a5a48"/><path d="M9 16L10 11L16 8V16Z" fill="#d25022"/></g></svg></span><span class="pn" style="letter-spacing:0.027px">Олександра Олексан...</span><svg class="pm" viewBox="0 0 10 12"><g fill="none" stroke="#4a4d51" stroke-width=".95"><rect x="3.700" y="1.500" width="2.800" height="5.400" rx="1.400"/><path d="M2 5.800A3.100 3.100 0 0 0 8.200 5.800M5.100 9V11"/></g><path d="M0.700 1.400L9.700 10.400" stroke="#fff" stroke-width="1.200"/><path d="M0.300 1.500L9.900 10.800" stroke="#3c4043" stroke-width="1.250"/></svg><span class="pd"><i style="position:absolute;left:0;top:0;width:2px;height:2px;border-radius:50%;background:#4a4d51;box-shadow:0 3.1px 0 #4a4d51,0 6.2px 0 #4a4d51"></i></span></div>
<div class="row" style="top:317px"><span class="pa" style="background:#888"><svg viewBox="0 0 16 16" style="position:absolute;left:0;top:0;width:16px;height:16px"><g filter="url(#avb)"><rect width="16" height="16" fill="#e2f0e8"/><path d="M2.500 13C1.500 6 4 2 8 2C12 2 14.500 6 13.500 13Z" fill="#5c3c32"/><ellipse cx="8" cy="8.300" rx="3.800" ry="4.400" fill="#f2d4c4"/><path d="M4 7C5 4 11 4 12 7C10 5.500 6 5.500 4 7Z" fill="#5c3c32"/><circle cx="6.300" cy="8.600" r=".8" fill="#3a2a28"/><circle cx="9.700" cy="8.600" r=".8" fill="#3a2a28"/><path d="M3 16C3 13 13 13 13 16Z" fill="#86a4e2"/></g></svg></span><span class="pn" style="letter-spacing:-0.126px">Радіслава Валеріївна ...</span><svg class="pm" viewBox="0 0 10 12"><g fill="none" stroke="#4a4d51" stroke-width=".95"><rect x="3.700" y="1.500" width="2.800" height="5.400" rx="1.400"/><path d="M2 5.800A3.100 3.100 0 0 0 8.200 5.800M5.100 9V11"/></g><path d="M0.700 1.400L9.700 10.400" stroke="#fff" stroke-width="1.200"/><path d="M0.300 1.500L9.900 10.800" stroke="#3c4043" stroke-width="1.250"/></svg><span class="pd"><i style="position:absolute;left:0;top:0;width:2px;height:2px;border-radius:50%;background:#4a4d51;box-shadow:0 3.1px 0 #4a4d51,0 6.2px 0 #4a4d51"></i></span></div>
<div class="abs" style="left:176px;top:195px;width:4.5px;height:103px;background:#dedee2;border-radius:2px 0 0 2px"></div>
</div>
<div id="dlbar" class="abs">
<svg class="abs" style="left:11px;top:9.2px;width:6.2px;height:7.8px" viewBox="0 0 6 8"><path d="M0.4 0.4H4L5.6 2V7.6H0.4Z" fill="#fff" stroke="#7a8aa0" stroke-width=".7"/><rect x="1.4" y="3" width="3.2" height="3" fill="#3b78e7"/></svg>
<span class="abs" style="left:25px;top:8.5px;font-size:6.3px;line-height:9px;color:#3c4043;white-space:nowrap">1606133256646_6...jpg</span>
<svg class="abs" style="left:103.5px;top:11px;width:5px;height:4px" viewBox="0 0 5 4"><path d="M0.4 3.4L2.5 1L4.6 3.4" fill="none" stroke="#5f6368" stroke-width=".8"/></svg>
<div class="abs" style="left:117.5px;top:3px;width:1px;height:19px;background:#dadce0"></div>
<div class="abs" style="left:697.5px;top:5.5px;width:53.5px;height:15px;border:1px solid #e4e6e9;border-radius:2px;color:#1a73e8;font-size:5.9px;line-height:13px;text-align:center;white-space:nowrap;font-weight:bold">Показать все</div>
<svg class="abs" style="left:756.5px;top:9.5px;width:6px;height:6px" viewBox="0 0 6 6"><path d="M0.5 0.5L5.5 5.5M5.5 0.5L0.5 5.5" stroke="#3c4043" stroke-width=".9"/></svg>
</div>
<div id="taskbar" class="abs">
<svg class="abs" style="left:7.8px;top:5.7px;width:8.8px;height:8.2px" viewBox="0 0 8 8" preserveAspectRatio="none"><path d="M0 1.1L3.3 0.6V3.8H0ZM3.7 0.55L8 0V3.8H3.7ZM0 4.2H3.3V7.4L0 6.9ZM3.7 4.2H8V8L3.7 7.45Z" fill="#111"/></svg>
<div class="abs" style="left:24.500px;top:0;width:171px;height:20px;background:#fff;border:1px solid #d4d4d4;border-top:none;border-bottom:none"></div>
<svg class="abs" style="left:30.400px;top:6px;width:7.800px;height:7.800px" viewBox="0 0 7 7"><circle cx="4.300" cy="2.700" r="2.200" fill="none" stroke="#333" stroke-width=".75"/><path d="M2.700 4.300L0.400 6.600" stroke="#333" stroke-width=".75"/></svg>
<span class="abs" style="left:44.700px;top:5.900px;font-size:7.250px;line-height:9px;color:#3a3a3a;white-space:nowrap">Введите здесь текст для поиска</span>
<div class="abs" style="left:204.400px;top:6.100px;width:7.600px;height:7.600px;border:1.250px solid #1c1c1c;border-radius:50%"></div>
<svg class="abs" style="left:228px;top:6.200px;width:8.200px;height:7.300px" viewBox="0 0 8 7" preserveAspectRatio="none"><rect x=".5" y="1.300" width="4.600" height="4.400" fill="none" stroke="#1c1c1c" stroke-width="1"/><path d="M6.900 0V7" stroke="#1c1c1c" stroke-width="1"/><rect x="5.600" y="1.800" width="1.600" height="1" fill="#1c1c1c"/><rect x="5.600" y="4.200" width="1.600" height="1" fill="#1c1c1c"/></svg>
<div class="abs" style="left:245.800px;top:0;width:23.800px;height:20px;background:#f1f2f3"></div>
<svg class="abs" style="left:252px;top:4.200px;width:11.500px;height:11.500px" viewBox="0 0 12 12"><circle cx="6" cy="6" r="6" fill="#ea4335"/><path d="M6 6L0.900 9A6 6 0 0 0 6 12L8.600 7.500Z" fill="#34a853"/><path d="M6 6L8.600 7.500L6 12A6 6 0 0 0 11.600 3.800H6Z" fill="#fbbc05"/><circle cx="6" cy="6" r="2.700" fill="#fff"/><circle cx="6" cy="6" r="2.100" fill="#4285f4"/></svg>
<div class="abs" style="left:245.800px;top:18px;width:23.800px;height:2px;background:#e5552e"></div>
<svg class="abs" style="left:277.200px;top:5.300px;width:11px;height:9px" viewBox="0 0 11 10" preserveAspectRatio="none"><path d="M0 1H4L5 2H11V9.500H0Z" fill="#f4c030"/><rect x="0" y="3" width="11" height="6.500" fill="#f8d352"/><rect x="2.500" y="4.600" width="6" height="4.900" fill="#3a86d8"/><rect x="3.800" y="6.400" width="3.400" height="3.100" fill="#f8d352"/></svg>
<div class="abs" style="left:273.300px;top:18px;width:19.700px;height:2px;background:#e5552e"></div>
<svg class="abs" style="left:301px;top:4.500px;width:12.300px;height:11px" viewBox="0 0 12 11"><circle cx="7" cy="5.500" r="5" fill="#ed6c47"/><path d="M7 0.500A5 5 0 0 1 12 5.500H7Z" fill="#ff8f6b"/><path d="M7 5.500H12A5 5 0 0 1 7 10.500Z" fill="#d35230"/><rect x="0" y="2.200" width="6.400" height="6.600" rx=".8" fill="#c43e1c"/><text x="3.200" y="7.500" font-size="5.400" font-weight="bold" fill="#fff" text-anchor="middle" font-family="Liberation Sans">P</text></svg>
<div class="abs" style="left:297.500px;top:18px;width:20.400px;height:2px;background:#e5552e"></div>
<svg class="abs" style="left:606px;top:4px;width:90px;height:12px" viewBox="0 0 90 12">
<path d="M2.500 7.600L5.500 4.600L8.500 7.600" fill="none" stroke="#222" stroke-width=".8"/>
<g fill="none" stroke="#222" stroke-width=".8"><rect x="16" y="4" width="4.400" height="5"/><path d="M17 4V2.600H19.400V4"/></g>
<path d="M27.500 2.500H31V8L29.200 9.500L27.500 8Z" fill="#222"/>
<path d="M38 7.500C38 5.500 40 4 42 4.500C44 4 45.500 5.600 45 7.500Z" fill="none" stroke="#222" stroke-width=".8"/><path d="M38 3L45.500 9.500" stroke="#222" stroke-width=".8"/>
<path d="M51 8.800A5 5 0 0 1 56 3.500M52.500 8.800A3.200 3.200 0 0 1 55.700 5.400M54.300 8.800A1.500 1.500 0 0 1 55.800 7.300" fill="none" stroke="#555" stroke-width=".7"/>
<path d="M62 5.200H63.500L65.500 3.400V9L63.500 7.200H62Z" fill="#222"/><path d="M67 4.600A2.600 2.600 0 0 1 67 7.800M68.400 3.600A4 4 0 0 1 68.400 8.800" fill="none" stroke="#222" stroke-width=".6"/>
<rect x="74" y="4" width="7" height="4.600" fill="#222"/><rect x="81" y="5.400" width="1" height="1.800" fill="#222"/><path d="M72.600 6.300H75" stroke="#222" stroke-width=".8"/>
</svg>
<span class="abs" style="left:693px;top:5.500px;font-size:5.700px;line-height:9px;color:#1a1a1a;white-space:nowrap;letter-spacing:-0.3px">РУС</span>
<span class="abs" style="left:704.500px;top:2px;width:40px;text-align:center;font-size:5.500px;line-height:8px;color:#1a1a1a;white-space:nowrap">14:25<br>23.11.2020</span>
<svg class="abs" style="left:747.700px;top:6px;width:12px;height:11px" viewBox="0 0 11 11" preserveAspectRatio="none"><path d="M0.500 0.500H8.500V6.500H3.200L1.500 8.200V6.500H0.500Z" fill="#222"/><circle cx="8.200" cy="8" r="2.600" fill="#e1e6e8" stroke="#222" stroke-width=".6"/><text x="8.200" y="9.600" font-size="4" fill="#222" text-anchor="middle" font-family="Liberation Sans">1</text></svg>
</div>
</div>
</body>
</html>
